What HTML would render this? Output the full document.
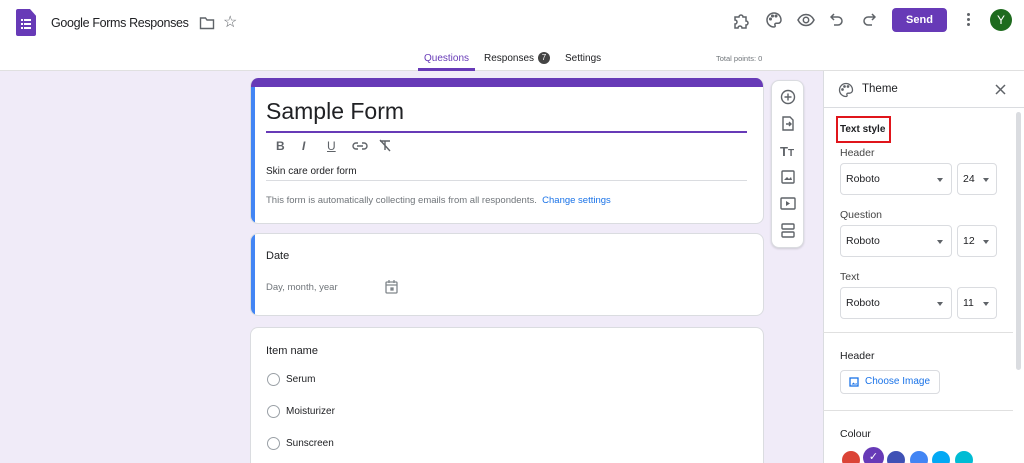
<!DOCTYPE html><html><head><style>
*{box-sizing:border-box;margin:0;padding:0}
html,body{width:1024px;height:463px;overflow:hidden}
body{font-family:"Liberation Sans",Arial,sans-serif;background:#f0ebf8;position:relative;color:#202124}
.a{position:absolute}
.top{left:0;top:0;width:1024px;height:71px;background:#fff;border-bottom:1px solid #e0e0e0}
.card{background:#fff;border-radius:8px;border:1px solid #dadce0}
.sel{border:1px solid #dadce0;border-radius:4px;font-size:10.5px;padding:0 0 0 5px;line-height:30px;height:32px;color:#202124}
.tri{position:absolute;top:14px;width:0;height:0;border-left:3px solid transparent;border-right:3px solid transparent;border-top:4px solid #5f6368}
.radio{width:13px;height:13px;border:1.5px solid #9aa0a6;border-radius:50%}
.lbl{font-size:10.5px;color:#202124}
.dot{position:absolute;top:451px;width:18px;height:18px;border-radius:50%}
</style></head><body>
<div class="a top"></div>
<div class="a" style="left:16px;top:9px;width:20px;height:27px;background:#673ab7;border-radius:2px;clip-path:polygon(0 0,70% 0,100% 25%,100% 100%,0 100%)"></div>
<svg class="a" style="left:16px;top:9px" width="20" height="27"><g fill="#fff"><rect x="5" y="10" width="2" height="2"/><rect x="8" y="10" width="7" height="2"/><rect x="5" y="14" width="2" height="2"/><rect x="8" y="14" width="7" height="2"/><rect x="5" y="18" width="2" height="2"/><rect x="8" y="18" width="7" height="2"/></g></svg>
<div class="a" style="left:51px;top:16px;font-size:12.5px;letter-spacing:-0.35px;color:#202124;white-space:nowrap">Google Forms Responses</div>
<svg class="a" style="left:199px;top:16px" width="16" height="14"><path d="M1.5 2h5l1.5 2h6.5v8.5h-13z" fill="none" stroke="#5f6368" stroke-width="1.4"/></svg>
<div class="a" style="left:223px;top:12px;font-size:16px;color:#5f6368">☆</div>
<svg class="a" style="left:732px;top:12px" width="18" height="18" fill="none" stroke="#5f6368" stroke-width="1.5"><path d="M3 5h4a2 2 0 0 1 4 0h3v4a2 2 0 0 1 0 4v3h-4a2 2 0 0 0-4 0H3v-4a2 2 0 0 0 0-4z"/></svg>
<svg class="a" style="left:765px;top:11px" width="18" height="18" fill="none" stroke="#5f6368" stroke-width="1.5"><path d="M9 2a7 7 0 0 0 0 14c1 0 1.5-.8 1-1.7-.5-1 0-2 1.2-2H13a3 3 0 0 0 3-3C16 5 13 2 9 2z"/><circle cx="5.5" cy="8" r=".8" fill="#5f6368"/><circle cx="7.5" cy="5" r=".8" fill="#5f6368"/><circle cx="11" cy="5" r=".8" fill="#5f6368"/></svg>
<svg class="a" style="left:797px;top:13px" width="18" height="14" fill="none" stroke="#5f6368" stroke-width="1.5"><path d="M1 7c2-4 5-5.5 8-5.5S15 3 17 7c-2 4-5 5.5-8 5.5S3 11 1 7z"/><circle cx="9" cy="7" r="2.7"/></svg>
<svg class="a" style="left:830px;top:12px" width="14" height="16" fill="none" stroke="#5f6368" stroke-width="1.5"><path d="M4 2L1 5l3 3M1 5h7a4 4 0 0 1 0 8H4"/></svg>
<svg class="a" style="left:862px;top:12px" width="14" height="16" fill="none" stroke="#5f6368" stroke-width="1.5"><path d="M10 2l3 3-3 3M13 5H6a4 4 0 0 0 0 8h4"/></svg>
<div class="a" style="left:892px;top:8px;width:55px;height:24px;background:#673ab7;border-radius:4px;color:#fff;font-size:11px;font-weight:bold;text-align:center;line-height:24px">Send</div>
<div class="a" style="left:967px;top:13px;width:3px;height:3px;background:#5f6368;border-radius:50%;box-shadow:0 5px 0 #5f6368,0 10px 0 #5f6368"></div>
<div class="a" style="left:990px;top:9px;width:22px;height:22px;background:#1e6b1e;border-radius:50%;color:#fff;font-size:12px;text-align:center;line-height:22px">Y</div>
<div class="a" style="left:424px;top:53px;font-size:10px;color:#673ab7">Questions</div>
<div class="a" style="left:418px;top:68px;width:57px;height:3px;background:#673ab7"></div>
<div class="a" style="left:484px;top:53px;font-size:10px;color:#202124">Responses</div>
<div class="a" style="left:538px;top:52px;width:12px;height:12px;background:#444;border-radius:50%;color:#fff;font-size:8px;text-align:center;line-height:12px">7</div>
<div class="a" style="left:565px;top:53px;font-size:10px;color:#202124">Settings</div>
<div class="a" style="left:716px;top:54px;font-size:7.5px;color:#70757a">Total points: 0</div>

<div class="a card" style="left:250px;top:78px;width:514px;height:146px;border-top:none;overflow:hidden">
 <div style="height:9px;background:#673ab7"></div>
 <div class="a" style="left:0;top:9px;width:4px;height:137px;background:#4285f4"></div>
</div>
<div class="a" style="left:266px;top:98px;font-size:23px;color:#202124">Sample Form</div>
<div class="a" style="left:266px;top:131px;width:481px;height:2px;background:#673ab7"></div>
<div class="a" style="left:276px;top:139px;font-size:12px;font-weight:bold;color:#5f6368">B</div>
<div class="a" style="left:302px;top:139px;font-size:12px;font-style:italic;font-weight:bold;color:#5f6368">I</div>
<div class="a" style="left:327px;top:139px;font-size:12px;text-decoration:underline;color:#5f6368">U</div>
<svg class="a" style="left:352px;top:141px" width="16" height="10" fill="none" stroke="#5f6368" stroke-width="1.4"><path d="M6 2H4a3 3 0 0 0 0 6h2M10 2h2a3 3 0 0 1 0 6h-2M5 5h6"/></svg>
<svg class="a" style="left:378px;top:139px" width="14" height="13" fill="none" stroke="#5f6368" stroke-width="1.4"><path d="M2 2h10M7 2v9M2 1l10 11"/></svg>
<div class="a" style="left:266px;top:166px;font-size:10px">Skin care order form</div>
<div class="a" style="left:266px;top:180px;width:481px;height:1px;background:#dadce0"></div>
<div class="a" style="left:266px;top:195px;font-size:9.5px;color:#70757a;white-space:nowrap">This form is automatically collecting emails from all respondents. <span style="color:#1a73e8">&nbsp;Change settings</span></div>

<div class="a card" style="left:250px;top:233px;width:514px;height:83px;overflow:hidden"><div style="width:4px;height:83px;background:#4285f4"></div></div>
<div class="a" style="left:266px;top:250px;font-size:11px">Date</div>
<div class="a" style="left:266px;top:282px;font-size:9.5px;color:#70757a">Day, month, year</div>
<svg class="a" style="left:385px;top:279px" width="13" height="15" fill="none" stroke="#80868b" stroke-width="1.3"><rect x="1" y="3" width="11" height="11" rx="1"/><path d="M1 6h11M4 1v3M9 1v3"/><rect x="6" y="9" width="2" height="2" fill="#80868b"/></svg>

<div class="a card" style="left:250px;top:327px;width:514px;height:150px"></div>
<div class="a" style="left:266px;top:345px;font-size:11px">Item name</div>
<div class="a radio" style="left:267px;top:373px"></div><div class="a" style="left:286px;top:374px;font-size:10px">Serum</div>
<div class="a radio" style="left:267px;top:405px"></div><div class="a" style="left:286px;top:406px;font-size:10px">Moisturizer</div>
<div class="a radio" style="left:267px;top:437px"></div><div class="a" style="left:286px;top:438px;font-size:10px">Sunscreen</div>

<div class="a card" style="left:771px;top:80px;width:33px;height:168px;box-shadow:0 1px 2px rgba(0,0,0,.15)"></div>
<svg class="a" style="left:779px;top:88px" width="18" height="155" fill="none" stroke="#5f6368" stroke-width="1.4">
<circle cx="9" cy="9" r="6.5"/><path d="M9 5.5v7M5.5 9h7"/>
<path d="M4 29h7l3 3v10H4z M7 36h5M10 34l2 2-2 2"/>
<text x="1" y="68" font-size="13" font-weight="bold" fill="#5f6368" stroke="none" font-family="Liberation Sans">T</text><text x="9" y="68" font-size="10" font-weight="bold" fill="#5f6368" stroke="none" font-family="Liberation Sans">T</text>
<rect x="3" y="83" width="12" height="12" rx="1"/><path d="M5 92l3-3 2 2 2-2 1 3z" fill="#5f6368" stroke="none"/>
<rect x="2" y="110" width="14" height="11" rx="1"/><path d="M7 113v5l4-2.5z" fill="#5f6368" stroke="none"/>
<rect x="3" y="136" width="12" height="5" rx="1"/><rect x="3" y="144" width="12" height="5" rx="1"/>
</svg>

<div class="a" style="left:823px;top:71px;width:201px;height:392px;background:#fff;border-left:1px solid #dadce0"></div>
<div class="a" style="left:823px;top:107px;width:201px;height:1px;background:#dadce0"></div>
<div class="a" style="left:1016px;top:112px;width:5px;height:258px;background:#dadce0;border-radius:3px"></div>
<svg class="a" style="left:838px;top:82px" width="16" height="16" fill="none" stroke="#5f6368" stroke-width="1.3"><path d="M8 1.5a6.5 6.5 0 0 0 0 13c1 0 1.4-.7 1-1.5-.5-1 0-1.8 1-1.8h1.5a3 3 0 0 0 3-3C14.5 4.5 11.7 1.5 8 1.5z"/><circle cx="4.5" cy="7.5" r=".7" fill="#5f6368"/><circle cx="6.5" cy="4.5" r=".7" fill="#5f6368"/><circle cx="10" cy="4.5" r=".7" fill="#5f6368"/></svg>
<div class="a" style="left:862px;top:83px;font-size:11.5px">Theme</div>
<svg class="a" style="left:995px;top:84px" width="11" height="11" stroke="#5f6368" stroke-width="1.5"><path d="M1 1l9 9M10 1l-9 9"/></svg>
<div class="a" style="left:836px;top:116px;width:55px;height:27px;border:2px solid #e0151b"></div>
<div class="a" style="left:840px;top:124px;font-size:10px;font-weight:bold">Text style</div>
<div class="a lbl" style="left:840px;top:147px;color:#444">Header</div>
<div class="a sel" style="left:840px;top:163px;width:112px">Roboto<span class="tri" style="left:96px"></span></div>
<div class="a sel" style="left:957px;top:163px;width:40px">24<span class="tri" style="left:25px"></span></div>
<div class="a lbl" style="left:840px;top:209px;color:#444">Question</div>
<div class="a sel" style="left:840px;top:225px;width:112px">Roboto<span class="tri" style="left:96px"></span></div>
<div class="a sel" style="left:957px;top:225px;width:40px">12<span class="tri" style="left:25px"></span></div>
<div class="a lbl" style="left:840px;top:271px;color:#444">Text</div>
<div class="a sel" style="left:840px;top:287px;width:112px">Roboto<span class="tri" style="left:96px"></span></div>
<div class="a sel" style="left:957px;top:287px;width:40px">11<span class="tri" style="left:25px"></span></div>
<div class="a" style="left:823px;top:332px;width:190px;height:1px;background:#e0e0e0"></div>
<div class="a lbl" style="left:840px;top:350px">Header</div>
<div class="a" style="left:840px;top:370px;width:100px;height:24px;border:1px solid #dadce0;border-radius:4px"></div>
<svg class="a" style="left:849px;top:377px" width="10" height="10" fill="none" stroke="#1a73e8" stroke-width="1.3"><rect x="1" y="1" width="8" height="8"/><path d="M2.5 7.5l2-2 1.5 1.5 1.5-1 .5 1.5z" fill="#1a73e8" stroke="none"/></svg>
<div class="a" style="left:865px;top:376px;font-size:10px;color:#1a73e8">Choose Image</div>
<div class="a" style="left:823px;top:410px;width:190px;height:1px;background:#e0e0e0"></div>
<div class="a lbl" style="left:840px;top:428px">Colour</div>
<div class="dot" style="left:842px;background:#db4437"></div>
<div class="a" style="left:863px;top:447px;width:21px;height:21px;border-radius:50%;background:#673ab7;color:#fff;font-size:11px;text-align:center;line-height:21px">✓</div>
<div class="dot" style="left:887px;background:#3f51b5"></div>
<div class="dot" style="left:910px;background:#4285f4"></div>
<div class="dot" style="left:932px;background:#03a9f4"></div>
<div class="dot" style="left:955px;background:#00bcd4"></div>
</body></html>
